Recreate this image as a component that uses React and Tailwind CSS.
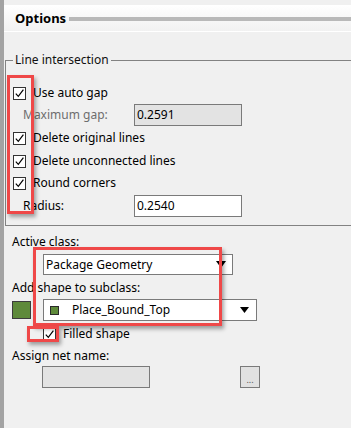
import React from "react";

function Check() {
  return (
    <span className="w-[13px] h-[13px] border border-[#333333] bg-white flex items-center justify-center shrink-0">
      <svg width="11" height="11" viewBox="0 0 11 11">
        <path d="M1.8 5.6 L4.3 8.4 L9.4 1.6" fill="none" stroke="#000" strokeWidth="1.2" />
      </svg>
    </span>
  );
}

function CheckRow({ label, className = "" }) {
  return (
    <div className={"flex items-center h-[22px] pl-[7px] gap-[7px] " + className}>
      <Check />
      <span>{label}</span>
    </div>
  );
}

function Triangle({ w = 9, h = 6 }) {
  return (
    <svg width={w} height={h} viewBox={`0 0 ${w} ${h}`}>
      <polygon points={`0,0 ${w},0 ${w / 2},${h}`} fill="#000" />
    </svg>
  );
}

export default function App() {
  return (
    <div className="relative w-[351px] h-[428px] overflow-hidden bg-[#f0f0f0] flex font-['Noto_Sans',sans-serif] text-[12px] text-black leading-[16px]">
      <div className="w-[4px] shrink-0 bg-[#a3a3a3]" />
      <div className="flex-1 flex flex-col min-w-0">
        <div className="h-[5px]" />
        <div className="h-[26px] flex items-center bg-gradient-to-b from-white to-[#f1f1f1]">
          <span className="pl-[11px] pr-[3px] font-bold text-[13px]">Options</span>
          <div className="flex-1 h-[4px] bg-[#b9b9b9] mt-[2px]" />
        </div>
        <div className="h-[1px] bg-white" />

        <fieldset className="mt-[20px] ml-[1px] mr-[-12px] border-t border-l border-b border-r border-[#828282] pt-[14px] pb-[8px]">
          <legend className="ml-[7px] px-[2px] leading-[16px] text-[#111]">Line intersection</legend>
          <CheckRow label="Use auto gap" />
          <div className="flex items-center h-[22px]">
            <span className="w-[128px] pl-[17px] text-[#6d6d6d]">Maximum gap:</span>
            <div className="w-[108px] h-[22px] border border-[#7a7a7a] bg-[#e3e3e3] flex items-center pl-[2px]">0.2591</div>
          </div>
          <CheckRow label="Delete original lines" className="mt-[1px]" />
          <CheckRow label="Delete unconnected lines" className="mt-[1px]" />
          <CheckRow label="Round corners" />
          <div className="flex items-center h-[22px] mt-[1px]">
            <span className="w-[128px] pl-[17px]">Radius:</span>
            <div className="w-[108px] h-[22px] border border-[#7a7a7a] bg-white flex items-center pl-[2px]">0.2540</div>
          </div>
        </fieldset>

        <div className="pl-[8px] flex flex-col">
          <div className="mt-[8px] h-[16px]">Active class:</div>
          <div className="mt-[4px] ml-[31px] w-[190px] h-[21px] border border-[#7a7a7a] bg-white flex items-center pl-[2px] pr-[6px]">
            <span className="flex-1">Package Geometry</span>
            <Triangle w={10} h={7} />
          </div>
          <div className="mt-[5px] h-[16px]">Add shape to subclass:</div>
          <div className="mt-[3px] h-[22px] flex items-center">
            <div className="w-[19px] h-[18px] border border-[#3c3c3c] bg-[#5e8a3a]" />
            <div className="ml-[12px] w-[214px] h-[22px] border border-[#7a7a7a] bg-white flex items-center pl-[6px] pr-[7px]">
              <div className="w-[9px] h-[9px] border border-[#2a2a2a] bg-[#5e8a3a]" />
              <span className="flex-1 ml-[13px]">Place_Bound_Top</span>
              <Triangle w={9} h={6} />
            </div>
          </div>
          <div className="mt-[2px] h-[22px] flex items-center ml-[31px] gap-[7px]">
            <Check />
            <span>Filled shape</span>
          </div>
          <div className="mt-[3px] h-[16px]">Assign net name:</div>
          <div className="mt-[2px] h-[22px] flex items-center">
            <div className="ml-[30px] w-[108px] h-[22px] border border-[#7a7a7a] bg-[#e3e3e3]" />
            <div className="ml-[90px] w-[20px] h-[22px] border border-[#7a7a7a] bg-[#e1e1e1] flex items-end justify-center pb-[3px] text-[9px] leading-[9px] text-[#555]">...</div>
          </div>
        </div>
      </div>

      <div className="absolute left-[7px] top-[75px] w-[27px] h-[139px] border-[3px] border-[#ef4848] shadow-[2px_3px_4px_rgba(0,0,0,0.35)]" />
      <div className="absolute left-[33px] top-[247px] w-[189px] h-[79px] border-[3px] border-[#ef4848] shadow-[2px_3px_4px_rgba(0,0,0,0.35)]" />
      <div className="absolute left-[27px] top-[326px] w-[32px] h-[16px] border-[3px] border-[#ef4848] shadow-[2px_3px_4px_rgba(0,0,0,0.35)]" />
    </div>
  );
}
